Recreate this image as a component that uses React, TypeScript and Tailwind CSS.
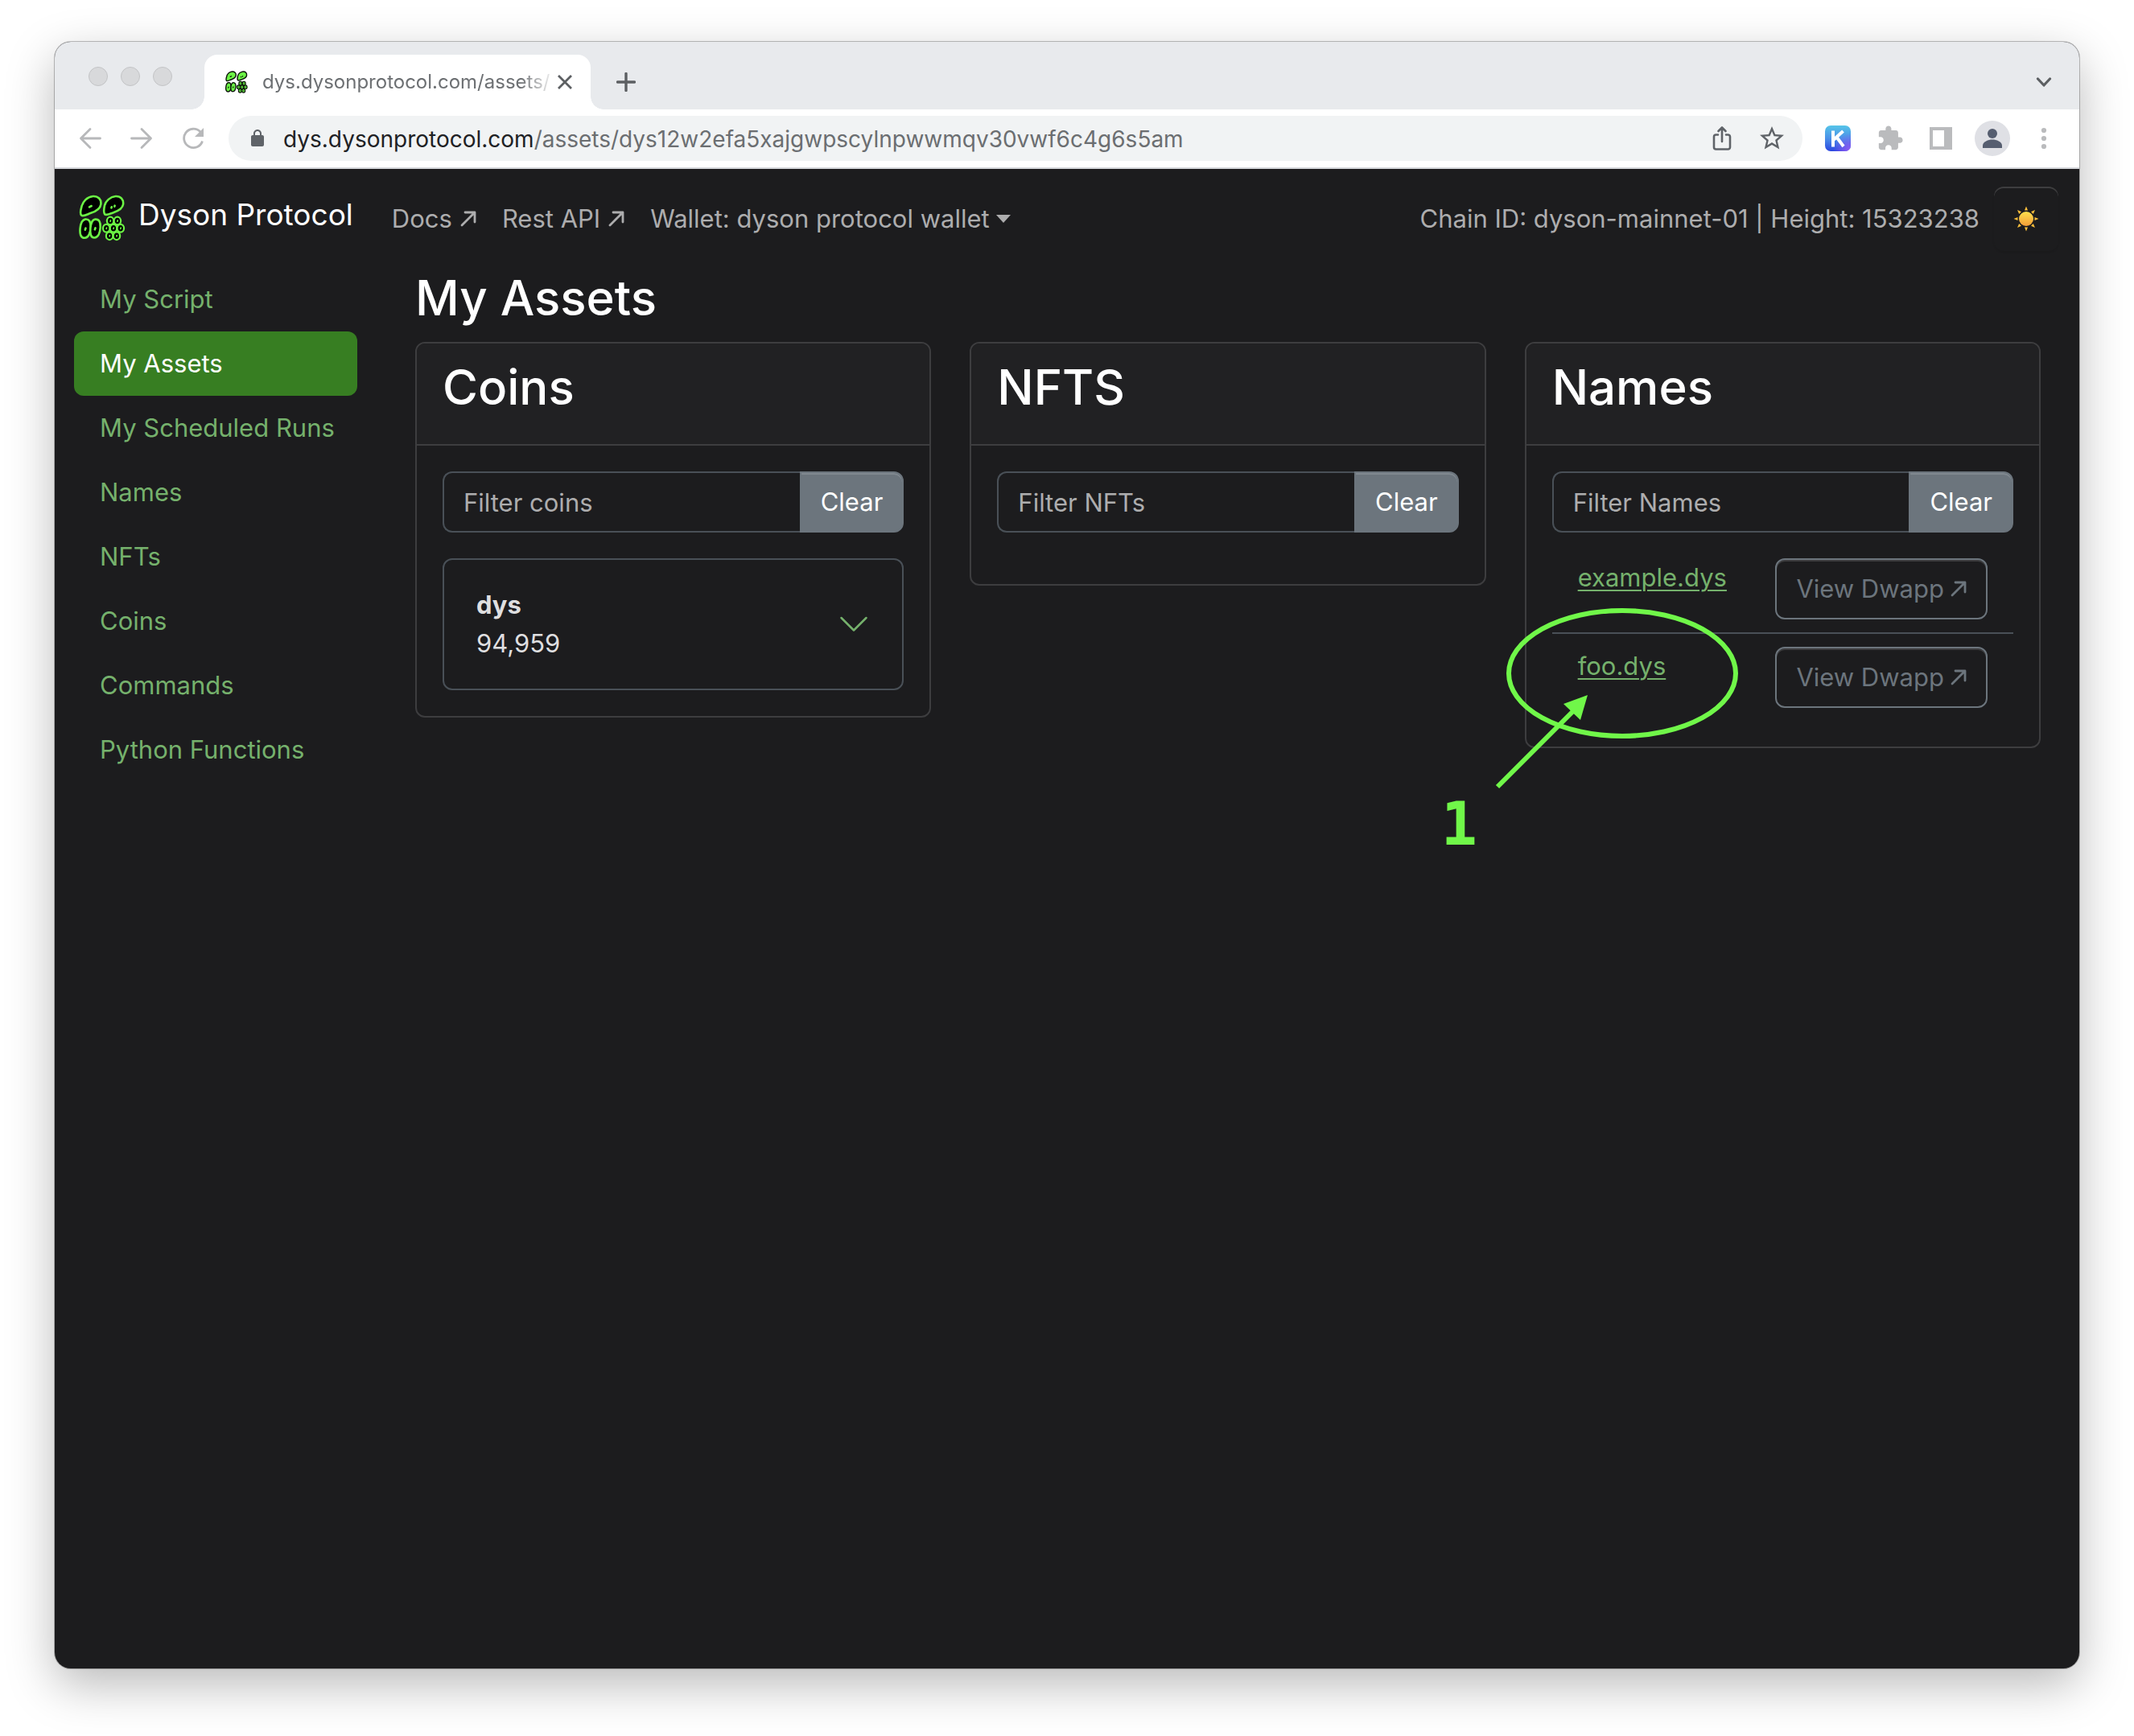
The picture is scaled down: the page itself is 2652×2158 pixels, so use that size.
import React, { useState } from "react";

const blobs = [
  "M62 96C66 74 84 56 106 54C126 53 138 66 136 84C134 104 116 112 98 118C84 123 70 132 62 127C56 121 59 106 62 96Z",
  "M150 90C154 72 172 56 192 54C212 53 223 66 221 84C219 102 202 110 184 116C170 121 158 128 151 123C145 116 148 100 150 90Z",
  "M76 142C92 140 97 152 97 170C97 190 90 212 74 213C58 213 55 196 57 176C59 158 64 144 76 142Z",
  "M114 142C130 141 135 153 134 172C133 192 126 212 111 212C97 212 94 196 96 176C98 158 103 143 114 142Z",
];
const cells = [
  [172, 148],
  [199, 148],
  [157, 176],
  [184, 176],
  [211, 176],
  [169, 205],
  [196, 205],
];
const dots = [
  [92, 95, 100, 91],
  [176, 98, 177, 95],
  [188, 93, 189, 90],
  [76, 182, 78, 176],
  [113, 181, 115, 175],
];

function Logo({ className, fill, line, core, width }: { className: string; fill: string; line: string; core: string; width: number }) {
  return (
    <svg viewBox="52 48 178 178" className={className} aria-hidden="true">
      <g fill={fill} stroke={line} strokeWidth={width} strokeLinejoin="round">
        {blobs.map((d) => (
          <path key={d} d={d} />
        ))}
        {cells.map(([x, y]) => (
          <ellipse key={`${x}-${y}`} cx={x} cy={y} rx="13" ry="15" strokeWidth={width * 0.85} />
        ))}
      </g>
      <g stroke={core} strokeWidth="8" strokeLinecap="round">
        {dots.map(([a, b, c, d]) => (
          <line key={`${a}-${b}`} x1={a} y1={b} x2={c} y2={d} />
        ))}
        {cells.map(([x, y]) => (
          <line key={`${x}-${y}`} x1={x} y1={y + 2} x2={x + 1} y2={y - 2} strokeWidth="5" />
        ))}
      </g>
    </svg>
  );
}

function ArrowUpRight() {
  return (
    <svg viewBox="0 0 20 20" className="size-5 shrink-0" fill="none" stroke="currentColor" strokeWidth="2.800" strokeLinecap="round" strokeLinejoin="round" aria-hidden="true">
      <path d="M2 18 18 2M6 2h12v12" />
    </svg>
  );
}

function Sun() {
  return (
    <svg viewBox="-16 -16 32 32" className="size-8" aria-hidden="true">
      <defs>
        <linearGradient id="sun" x1="0" y1="0" x2="0" y2="1">
          <stop offset="0" stopColor="#ffe14d" />
          <stop offset="1" stopColor="#f29d38" />
        </linearGradient>
      </defs>
      <circle r="9" fill="url(#sun)" />
      <g fill="#fbbf3c">
        {[0, 45, 90, 135, 180, 225, 270, 315].map((a) => (
          <path key={a} d="M-2 -10.5 0 -15.5 2 -10.5Z" transform={`rotate(${a})`} />
        ))}
      </g>
    </svg>
  );
}

function TabStrip() {
  return (
    <div className="flex h-[84px] items-end bg-[#e8eaed]">
      <div className="flex h-full items-center gap-4 pt-0.5 pl-[42px]">
        {["Close window", "Minimise window", "Zoom window"].map((label) => (
          <button key={label} aria-label={label} className="size-6 rounded-full border border-[#c3c4c6] bg-[#d8d9db]" />
        ))}
      </div>
      <div className="ml-6 flex items-end">
        <div className="size-4 bg-[radial-gradient(circle_at_0_0,transparent_15.5px,white_16px)]" />
        <div className="flex h-[68px] w-[480px] items-center rounded-t-2xl bg-white pr-5 pl-[26px]">
          <Logo className="size-7 shrink-0" fill="#6cf545" line="#0c160a" core="#0c160a" width={9} />
          <span className="ml-[18px] flex-1 mask-[linear-gradient(to_right,black_88%,transparent)] text-[24px] leading-8 whitespace-nowrap text-[#6d7073]">
            dys.dysonprotocol.com/assets/
          </span>
          <button aria-label="Close tab" className="text-[#5c5f62]">
            <svg viewBox="0 0 24 24" className="size-6" fill="none" stroke="currentColor" strokeWidth="2.800">
              <path d="M4 4 20 20M20 4 4 20" />
            </svg>
          </button>
        </div>
        <div className="size-4 bg-[radial-gradient(circle_at_100%_0,transparent_15.5px,white_16px)]" />
      </div>
      <button aria-label="New tab" className="ml-4 flex h-[68px] items-center text-[#5c5f62]">
        <svg viewBox="0 0 24 24" className="size-6" fill="none" stroke="currentColor" strokeWidth="3.400" strokeLinecap="round">
          <path d="M12 1.500V22.500M1.500 12H22.500" />
        </svg>
      </button>
      <button aria-label="Search tabs" className="mr-[34px] ml-auto flex h-[68px] items-center text-[#5c5f62]">
        <svg viewBox="0 0 20 20" className="size-5" fill="none" stroke="currentColor" strokeWidth="3.200" strokeLinecap="round" strokeLinejoin="round">
          <path d="M2.500 6 10 14 17.500 6" />
        </svg>
      </button>
    </div>
  );
}

function Toolbar() {
  return (
    <div className="flex h-[74px] items-center border-b-2 border-[#d5d7db] bg-white pr-[34px] pl-[30px]">
      <div className="flex gap-9 text-[#b7b8ba]">
        <button aria-label="Back">
          <svg viewBox="0 0 28 28" className="size-7" fill="none" stroke="currentColor" strokeWidth="2.800" strokeLinecap="round" strokeLinejoin="round">
            <path d="M26.500 14H2.500M14 2.500 2.500 14 14 25.500" />
          </svg>
        </button>
        <button aria-label="Forward">
          <svg viewBox="0 0 28 28" className="size-7" fill="none" stroke="currentColor" strokeWidth="2.800" strokeLinecap="round" strokeLinejoin="round">
            <path d="M1.500 14H25.500M14 2.500 25.500 14 14 25.500" />
          </svg>
        </button>
        <button aria-label="Reload">
          <svg viewBox="0 0 28 28" className="size-7" fill="none" stroke="currentColor" strokeWidth="2.800">
            <path d="M25.500 17.500A11.700 11.700 0 1 1 22.800 5.800L25 8" />
            <path d="M27 1V12H16Z" fill="currentColor" stroke="none" />
          </svg>
        </button>
      </div>
      <div className="ml-[30px] flex h-14 flex-1 items-center rounded-full bg-[#f1f3f4] pr-5 pl-6 text-[#5f6368]">
        <svg viewBox="0 0 24 24" className="size-6 shrink-0" fill="currentColor" aria-hidden="true">
          <path d="M18 8h-1V6c0-2.760-2.240-5-5-5S7 3.240 7 6v2H6c-1.100 0-2 .9-2 2v10c0 1.100.9 2 2 2h12c1.100 0 2-.9 2-2V10c0-1.100-.9-2-2-2zM9 6c0-1.660 1.340-3 3-3s3 1.340 3 3v2H9V6z" />
        </svg>
        <button aria-label="Address bar" className="ml-5 flex-1 pt-0.5 text-left text-[28px] leading-9 whitespace-nowrap text-[#6b6e71]">
          <span className="text-[#202124]">dys.dysonprotocol.com</span>/assets/dys12w2efa5xajgwpscylnpwwmqv30vwf6c4g6s5am
        </button>
        <button aria-label="Share">
          <svg viewBox="0 0 32 32" className="size-8" fill="none" stroke="currentColor" strokeWidth="2.600" strokeLinecap="round" strokeLinejoin="round">
            <path d="M11 11.500H8.500a2.500 2.500 0 0 0-2.500 2.500V27a2.500 2.500 0 0 0 2.500 2.500h15A2.500 2.500 0 0 0 26 27V14a2.500 2.500 0 0 0-2.500-2.500H21M16 20V3M11.500 7 16 2.500 20.500 7" />
          </svg>
        </button>
        <button aria-label="Bookmark this tab" className="ml-7">
          <svg viewBox="0 0 24 24" className="size-9" fill="currentColor">
            <path d="M22 9.240l-7.190-.62L12 2 9.190 8.630 2 9.240l5.460 4.730L5.820 21 12 17.270 18.180 21l-1.630-7.030L22 9.240zM12 15.400l-3.760 2.270 1-4.280-3.320-2.880 4.380-.38L12 6.100l1.710 4.040 4.380.38-3.320 2.880 1 4.280L12 15.400z" />
          </svg>
        </button>
      </div>
      <button aria-label="Keplr" className="ml-7">
        <svg viewBox="0 0 32 32" className="size-8">
          <defs>
            <linearGradient id="kbase" x1="0" y1="0" x2="0" y2="1">
              <stop offset="0" stopColor="#56c5e8" />
              <stop offset="0.5" stopColor="#4a90e8" />
              <stop offset="1" stopColor="#2a45e0" />
            </linearGradient>
            <radialGradient id="kglow" cx="1" cy="1" r="0.7">
              <stop offset="0" stopColor="#9a5cf5" />
              <stop offset="1" stopColor="#9a5cf5" stopOpacity="0" />
            </radialGradient>
          </defs>
          <rect width="32" height="32" rx="7" fill="url(#kbase)" />
          <rect width="32" height="32" rx="7" fill="url(#kglow)" />
          <path d="M10 6.500V26.500M22.500 7 11 17.500M14.500 14.500 23 26" fill="none" stroke="white" strokeWidth="4" />
        </svg>
      </button>
      <button aria-label="Extensions" className="ml-8 text-[#babbbd]">
        <svg viewBox="0 0 24 24" className="size-[34px]" fill="currentColor">
          <path d="M20.500 11H19V7c0-1.100-.9-2-2-2h-4V3.500C13 2.120 11.880 1 10.500 1S8 2.120 8 3.500V5H4c-1.100 0-1.990.9-1.990 2v3.800H3.500c1.490 0 2.700 1.210 2.700 2.700s-1.210 2.700-2.700 2.700H2V20c0 1.100.9 2 2 2h3.800v-1.500c0-1.490 1.210-2.700 2.700-2.700 1.490 0 2.700 1.210 2.700 2.700V22H17c1.100 0 2-.9 2-2v-4h1.500c1.380 0 2.500-1.120 2.500-2.500S21.880 11 20.500 11z" />
        </svg>
      </button>
      <button aria-label="Side panel" className="ml-8 text-[#babbbd]">
        <svg viewBox="0 0 28 28" className="size-7" fill="none" stroke="currentColor">
          <path d="M2 2H26V26H2Z" strokeWidth="4" />
          <path d="M22 2V26" strokeWidth="8" />
        </svg>
      </button>
      <button aria-label="Profile" className="ml-7 size-11 rounded-full bg-[#dfe0e5] text-[#565e70]">
        <svg viewBox="0 0 44 44" className="size-11" fill="currentColor">
          <circle cx="22" cy="16" r="6" />
          <path d="M10 34V31C10 26 17 23.500 22 23.500S34 26 34 31V34Z" />
        </svg>
      </button>
      <button aria-label="Menu" className="ml-8 text-[#babbbd]">
        <svg viewBox="0 0 20 28" className="h-7 w-5" fill="currentColor">
          <circle cx="10" cy="4" r="3.100" />
          <circle cx="10" cy="14" r="3.100" />
          <circle cx="10" cy="24" r="3.100" />
        </svg>
      </button>
    </div>
  );
}

function Navbar() {
  return (
    <header className="flex min-h-[122px] items-center pr-[26px] pl-[30px] text-[31px] leading-12 whitespace-nowrap text-[#adadae]">
      <a href="#home" className="flex items-center gap-4 text-[37px] text-white">
        <Logo className="size-[58px]" fill="#000000" line="#6cf545" core="#6cf545" width={8} />
        <span className="pb-2">Dyson Protocol</span>
      </a>
      <nav className="ml-12 flex items-center gap-8 pt-0.5">
        <a href="#docs" className="flex items-center gap-2.5">
          Docs <ArrowUpRight />
        </a>
        <a href="#rest" className="flex items-center gap-2.5">
          Rest API <ArrowUpRight />
        </a>
        <button className="flex items-center gap-2">
          Wallet: dyson protocol wallet
          <svg viewBox="0 0 18 10" className="h-2.5 w-[18px]" fill="currentColor" aria-hidden="true">
            <path d="M0 0H18L9 10Z" />
          </svg>
        </button>
      </nav>
      <span className="ml-auto pt-0.5">Chain ID: dyson-mainnet-01 | Height: 15323238</span>
      <button aria-label="Toggle theme" className="mt-0.5 ml-[18px] flex h-20 w-20 items-center justify-center rounded-xl shadow-[inset_0_2px_0_rgba(255,255,255,0.15),0_2px_2px_rgba(0,0,0,0.08)]">
        <Sun />
      </button>
    </header>
  );
}

const links = ["My Script", "My Assets", "My Scheduled Runs", "Names", "NFTs", "Coins", "Commands", "Python Functions"];

function Sidebar() {
  return (
    <nav className="w-[352px] shrink-0 text-[31px] leading-12 whitespace-nowrap">
      {links.map((label) => (
        <a
          key={label}
          href={`#${label.toLowerCase().replace(/ /g, "-")}`}
          className={label === "My Assets" ? "block rounded-xl bg-[#377e22] px-8 py-4 text-white" : "block px-8 py-4 text-[#75b16c]"}
        >
          {label}
        </a>
      ))}
    </nav>
  );
}

function Card({ title, children }: { title: string; children: React.ReactNode }) {
  return (
    <section className="rounded-xl border-2 border-[#3d3d3f] text-[31px] leading-12">
      <div className="rounded-t-[10px] border-b-2 border-[#3d3d3f] bg-[#212123] px-8 pt-4 pb-8">
        <h2 className="text-[60px] leading-[77px] font-medium text-white">{title}</h2>
      </div>
      {children}
    </section>
  );
}

function Filter({ label }: { label: string }) {
  const [value, setValue] = useState("");
  return (
    <div className="flex">
      <input
        aria-label={label}
        placeholder={label}
        value={value}
        onChange={(e) => setValue(e.target.value)}
        className="h-[76px] min-w-0 flex-1 rounded-l-xl border-2 border-r-0 border-[#495057] px-6 text-[#dee2e6] placeholder:text-[#adadae]"
      />
      <button
        onClick={() => setValue("")}
        className="rounded-r-xl border-2 border-[#6c757d] bg-[#6c757d] px-6 text-white shadow-[inset_0_2px_0_rgba(255,255,255,0.15)]"
      >
        Clear
      </button>
    </div>
  );
}

function Callout() {
  return (
    <div className="pointer-events-none absolute -top-10 -left-36 h-[310px] w-[380px]">
      <svg viewBox="0 0 380 310" className="h-[310px] w-[380px]" fill="none" stroke="#70f749" strokeWidth="6" aria-hidden="true">
        <ellipse cx="231" cy="89" rx="141" ry="78" />
        <path d="M76 230 172 134" />
        <path d="M188 116 158 127 179 147Z" fill="#70f749" stroke="none" />
      </svg>
      <span className="absolute top-[234px] left-1.5 font-['DejaVu_Sans_Mono'] text-[75px] leading-[84px] font-bold text-[#70f749]">1</span>
    </div>
  );
}

function NameRow({ name, last }: { name: string; last?: boolean }) {
  return (
    <li className={last ? "relative flex items-start justify-between px-8 py-4" : "flex items-start justify-between border-b-2 border-[#495057] px-8 py-4"}>
      <a href={`#${name}`} className="text-[#75b16c] underline decoration-2 underline-offset-4">
        {name}
      </a>
      <button className="flex h-[76px] items-center gap-2 rounded-xl border-2 border-[#6c757d] px-6 whitespace-nowrap text-[#6c757d] shadow-[inset_0_2px_0_rgba(255,255,255,0.15)]">
        View Dwapp <ArrowUpRight />
      </button>
      {last && <Callout />}
    </li>
  );
}

export default function App() {
  return (
    <div className="flex min-h-screen flex-col bg-white px-[68px] pt-[52px] pb-[84px] font-['Inter',sans-serif]">
      <div className="flex flex-1 flex-col overflow-hidden rounded-[20px] bg-[#1c1c1e] shadow-[0_0_0_1px_rgba(0,0,0,0.25),0_20px_60px_rgba(0,0,0,0.28)]">
        <TabStrip />
        <Toolbar />
        <Navbar />
        <div className="flex gap-[72px] pr-12 pl-6">
          <Sidebar />
          <main className="min-w-0 flex-1">
            <h1 className="mb-4 text-[60px] leading-[77px] font-medium text-white">My Assets</h1>
            <div className="grid grid-cols-3 items-start gap-12">
              <Card title="Coins">
                <div className="flex flex-col gap-8 p-8">
                  <Filter label="Filter coins" />
                  <div className="flex items-center justify-between rounded-xl border-2 border-[#495057] px-10 py-8 text-[#dfdfe0]">
                    <div>
                      <div className="font-bold">dys</div>
                      <div>94,959</div>
                    </div>
                    <button aria-label="Show dys details" className="text-[#75b16c]">
                      <svg viewBox="0 0 40 40" className="size-10" fill="none" stroke="currentColor" strokeWidth="2.500" strokeLinecap="round" strokeLinejoin="round">
                        <path d="M4.500 12 20 27.500 35.500 12" />
                      </svg>
                    </button>
                  </div>
                </div>
              </Card>
              <Card title="NFTS">
                <div className="px-8 pt-8 pb-16">
                  <Filter label="Filter NFTs" />
                </div>
              </Card>
              <Card title="Names">
                <div className="p-8">
                  <Filter label="Filter Names" />
                  <ul className="mt-4">
                    <NameRow name="example.dys" />
                    <NameRow name="foo.dys" last />
                  </ul>
                </div>
              </Card>
            </div>
          </main>
        </div>
      </div>
    </div>
  );
}
